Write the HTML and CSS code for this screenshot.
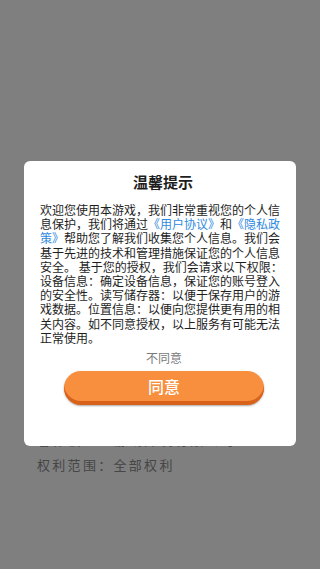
FILE: index.html
```html
<!DOCTYPE html>
<html lang="zh-CN">
<head>
<meta charset="utf-8">
<meta name="viewport" content="width=device-width, initial-scale=1">
<title>温馨提示</title>
<link rel="stylesheet" href="styles.css">
</head>
<body>
<div class="page">
  <div class="info">
    <p class="info-line">著作权人：游戏开发有限公司</p>
    <p class="info-line">权利范围：全部权利</p>
  </div>
</div>
<div class="overlay">
  <div class="dialog">
    <h1 class="dialog-title">温馨提示</h1>
    <p class="dialog-body">欢迎您使用本游戏，我们非常重视您的个人信息保护，我们将通过<a class="link" href="#">《用户协议》</a>和<a class="link" href="#">《隐私政策》</a>帮助您了解我们收集您个人信息。我们会基于先进的技术和管理措施保证您的个人信息安全。 基于您的授权，我们会请求以下权限：设备信息：确定设备信息，保证您的账号登入的安全性。读写储存器：以便于保存用户的游戏数据。位置信息：以便向您提供更有用的相关内容。如不同意授权，以上服务有可能无法正常使用。</p>
    <div class="disagree">不同意</div>
    <button class="agree" type="button">同意</button>
  </div>
</div>
</body>
</html>
```

FILE: styles.css
```css
html, body {
  margin: 0;
  padding: 0;
  width: 320px;
  height: 569px;
  overflow: hidden;
  background: #ffffff;
  font-family: "Noto Sans CJK SC", "Noto Sans", sans-serif;
}

.page {
  height: 569px;
  box-sizing: border-box;
  padding: 427px 0 0 37px;
}

.info-line {
  margin: 0;
  font-size: 13px;
  line-height: 25px;
  letter-spacing: 2.3px;
  color: #8c8c8c;
}

.overlay {
  position: fixed;
  left: 0;
  top: 0;
  right: 0;
  bottom: 0;
  background: rgba(0, 0, 0, 0.5);
  display: flex;
  justify-content: center;
  align-items: flex-start;
  padding-top: 161px;
}

.dialog {
  width: 272px;
  box-sizing: border-box;
  background: #ffffff;
  border-radius: 6px;
  padding: 10px 12px 41px 16px;
  display: flex;
  flex-direction: column;
  align-items: center;
}

.dialog-title {
  margin: 0;
  font-size: 15px;
  line-height: 22px;
  font-weight: bold;
  color: #1e1e1e;
  padding-left: 2px;
}

.dialog-body {
  margin: 10px 0 0 0;
  font-size: 12px;
  line-height: 14.2px;
  color: #1e1e1e;
  align-self: stretch;
  text-align: left;
}

.link {
  color: #2f8ae0;
  text-decoration: none;
}

.disagree {
  margin-top: 5px;
  font-size: 12px;
  line-height: 16px;
  color: #7a7a7a;
  padding-left: 4px;
}

.agree {
  margin: 5px 0 0 4px;
  width: 200px;
  height: 34px;
  border: none;
  border-radius: 17px;
  background: #f78f3f;
  box-shadow: inset 0 -4px 0 #d9621a, 0 1px 2px rgba(0, 0, 0, 0.35);
  color: #ffffff;
  font-family: "Noto Sans CJK SC", "Noto Sans", sans-serif;
  font-size: 16px;
  line-height: 30px;
  padding: 0 0 4px 0;
  font-weight: 500;
}
```
